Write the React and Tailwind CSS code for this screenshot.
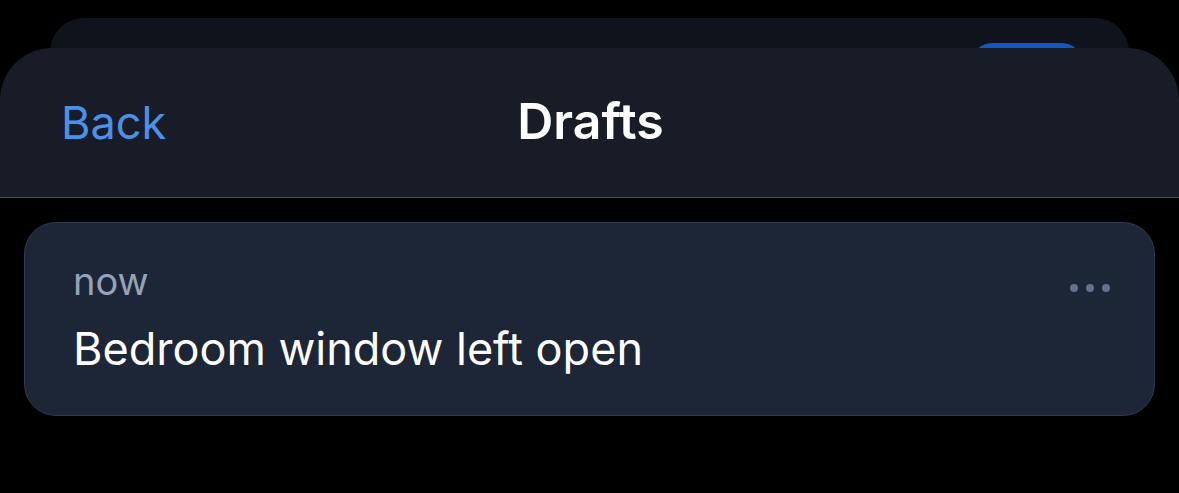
export default function App() {
  return (
    <div
      className="relative w-full h-[493px] bg-black overflow-hidden"
      style={{ fontFamily: "Inter, 'Noto Sans', sans-serif" }}
    >
      {/* sheet behind */}
      <div className="absolute top-[18px] left-[50px] right-[50px] h-[80px] rounded-t-[34px] bg-[#0f131b]">
        <div className="absolute left-[922px] top-[25px] w-[110px] h-[40px] rounded-full bg-[#1557c0]" />
      </div>

      <div className="relative pt-[48px]">
        {/* front sheet header */}
        <div className="relative h-[150px] rounded-t-[52px] bg-[#171c27] border-b border-[#4a5061] flex items-center justify-center">
          <span className="absolute left-[61px] top-[48px] text-[45px] leading-[54px] text-[#4a91ea]">
            Back
          </span>
          <span className="text-[50px] leading-[56px] font-semibold text-white -mt-[3px] ml-[2px]">
            Drafts
          </span>
        </div>

        {/* card */}
        <div className="mx-[24px] mt-[24px] h-[194px] rounded-[32px] border border-[#2f3a4e] bg-[#1c2637] pl-[48px] pr-[44px] pt-[36px] relative">
          <div className="flex items-center justify-between">
            <span className="text-[38px] leading-[44px] text-[#94a3b8]">now</span>
            <span className="flex gap-[8px] mt-[14px]">
              <span className="w-[8px] h-[8px] rounded-full bg-[#64738f]" />
              <span className="w-[8px] h-[8px] rounded-full bg-[#64738f]" />
              <span className="w-[8px] h-[8px] rounded-full bg-[#64738f]" />
            </span>
          </div>
          <div className="mt-[20px] text-[45px] leading-[52px] text-white">
            Bedroom window left open
          </div>
        </div>
      </div>
    </div>
  );
}
